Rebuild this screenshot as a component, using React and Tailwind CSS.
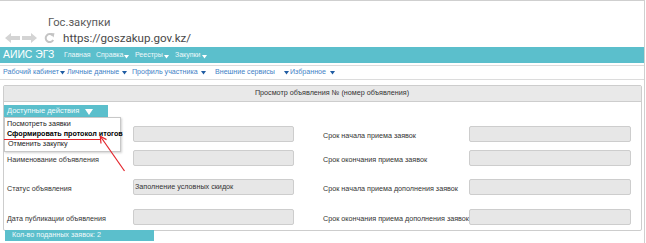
import React from "react";

function TriW() {
  return (
    <svg width="5" height="4" viewBox="0 0 5 4" className="ml-[1px] mt-[5px]">
      <polygon points="0,0 5,0 2.5,3.5" fill="#ffffff" />
    </svg>
  );
}

function TriB({ ml }) {
  return (
    <svg width="5" height="4" viewBox="0 0 5 4" className={`${ml} mt-[4px]`}>
      <polygon points="0,0 5,0 2.5,3.5" fill="#1f5ca3" />
    </svg>
  );
}

function Row({ className, l1, v1, l2 }) {
  return (
    <div className={`flex items-center h-[16px] ${className}`}>
      <div className="w-[126px] pt-[4px] text-[7.2px] text-[#333] whitespace-nowrap">{l1}</div>
      <div className="w-[161px] h-[16px] bg-[#e7e7e7] border border-[#cdcdcd] rounded-[2px] flex items-center pl-[1px] text-[7.2px] text-[#333] whitespace-nowrap">
        {v1}
      </div>
      <div className="ml-[29px] w-[146px] pt-[4px] text-[7.2px] text-[#333] whitespace-nowrap">{l2}</div>
      <div className="w-[162px] h-[16px] bg-[#e7e7e7] border border-[#cdcdcd] rounded-[2px]" />
    </div>
  );
}

export default function App() {
  return (
    <div className="relative w-[646px] h-[243px] bg-white overflow-hidden font-['Liberation_Sans',Arial,sans-serif]">
      <div className="w-[645px] h-[243px] border-t border-r border-[#cfcfcf]">
        {/* browser top */}
        <div className="h-[46px] pt-[14px] font-['Roboto',sans-serif] text-[#5a5a5a]">
          <div className="pl-[48px] text-[11.2px] leading-[15px]">Гос.закупки</div>
          <div className="flex items-center h-[16px]">
            <svg width="56" height="12" viewBox="0 0 56 12" className="ml-[4px]">
              <polygon points="1,6 7,1 7,4 16,4 16,8 7,8 7,11" fill="#d4d4d4" />
              <polygon points="33,6 27,1 27,4 18,4 18,8 27,8 27,11" fill="#d4d4d4" />
              <path d="M48.5 3.2 A4 4 0 1 0 49.2 8" fill="none" stroke="#c4c4c4" strokeWidth="2" />
              <polygon points="46,1 50.5,1.2 49.5,5.5" fill="#c4c4c4" />
            </svg>
            <span className="ml-[3px] text-[11.6px] leading-[16px] text-[#484848]">https://goszakup.gov.kz/</span>
          </div>
        </div>

        {/* teal menu */}
        <div className="h-[16px] bg-[#5bbfcc] flex items-center text-white">
          <div className="w-[64px] pl-[3px] text-[10.4px] leading-[16px] whitespace-nowrap">АИИС ЭГЗ</div>
          <div className="w-[32px] text-[7px] text-[#eef8fa] whitespace-nowrap">Главная</div>
          <div className="w-[39px] flex text-[7px] text-[#eef8fa] whitespace-nowrap">Справка<TriW /></div>
          <div className="w-[40px] flex text-[7px] text-[#eef8fa] whitespace-nowrap">Реестры<TriW /></div>
          <div className="flex text-[7px] text-[#eef8fa] whitespace-nowrap">Закупки<TriW /></div>
        </div>

        {/* second menu */}
        <div className="mt-[2px] h-[15px] border-t border-b border-[#dcdcdc] flex items-center text-[7.1px] text-[#3f82c6] whitespace-nowrap">
          <div className="w-[67px] pl-[3px] flex">Рабочий кабинет<TriB ml="ml-[1px]" /></div>
          <div className="w-[65px] flex">Личные данные<TriB ml="ml-[3px]" /></div>
          <div className="w-[83px] flex">Профиль участника<TriB ml="ml-[3px]" /></div>
          <div className="w-[75px] flex">Внешние сервисы<TriB ml="ml-[9px]" /></div>
          <div className="flex">Избранное<TriB ml="ml-[4px]" /></div>
        </div>

        {/* panel */}
        <div className="ml-[3px] mt-[5px] w-[639px] border border-[#cdcdcd] rounded-[2px]">
          <div className="h-[16px] bg-[#e9e9e9] border-b border-[#cdcdcd] flex items-center justify-center pl-[19px] text-[7.2px] text-[#333] whitespace-nowrap">
            Просмотр объявления № (номер объявления)
          </div>
          <div className="pl-[3px] pb-[5px]">
            <div className="relative mt-[3px] -ml-[3px] w-[104px] z-10">
              <div className="h-[12px] bg-[#5bbfcc] flex items-center pl-[3px] text-[7.5px] text-[#f4fbfc] whitespace-nowrap">
                Доступные действия
                <svg width="8" height="6" viewBox="0 0 8 6" className="ml-[6px] mt-[2px]">
                  <polygon points="0,0 8,0 4,6" fill="#ffffff" />
                </svg>
              </div>
              <div className="absolute top-full left-0 w-[117px] bg-white border border-[#c8c8c8] shadow-[1px_1px_2px_rgba(0,0,0,0.18)] pt-[1px] pb-[2px] pl-[2px] text-[7.2px] whitespace-nowrap">
                <div className="h-[10px] leading-[10px] text-[#222]">Посмотреть заявки</div>
                <div className="h-[10px] leading-[10px] font-bold text-black">Сформировать протокол итогов</div>
                <div className="h-[10px] leading-[10px] pl-[1px] text-[#222]">Отменить закупку</div>
              </div>
            </div>
            <Row className="mt-[9px]" l1="" v1="" l2="Срок начала приема заявок" />
            <Row className="mt-[8px]" l1="Наименование объявления" v1="" l2="Срок окончания приема заявок" />
            <Row className="mt-[13px]" l1="Статус объявления" v1="Заполнение условных скидок" l2="Срок начала приема дополнения заявок" />
            <Row className="mt-[14px]" l1="Дата публикации объявления" v1="" l2="Срок окончания приема дополнения заявок" />
          </div>
        </div>

        <div className="ml-[5px] -mt-[1px] w-[149px] h-[11px] bg-[#5bbfcc] flex items-center pl-[7px] text-[7.2px] text-[#f2fafb] whitespace-nowrap">
          Кол-во поданных заявок: 2
        </div>
      </div>

      {/* red annotation */}
      <svg className="absolute left-0 top-0 pointer-events-none z-20" width="646" height="243" viewBox="0 0 646 243">
        <line x1="4" y1="139.5" x2="101" y2="139.5" stroke="#e3242b" strokeWidth="1.2" />
        <line x1="124.5" y1="171" x2="100.5" y2="136.5" stroke="#e3242b" strokeWidth="1.2" />
        <polyline points="101,143.5 100.3,136.2 106.5,139.6" fill="none" stroke="#e3242b" strokeWidth="1.2" />
      </svg>
    </div>
  );
}
